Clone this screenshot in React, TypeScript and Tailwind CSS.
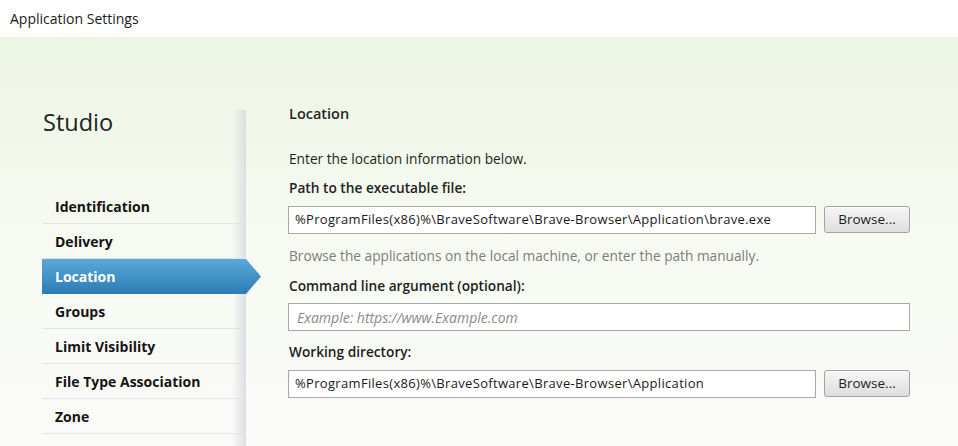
const navItems = [
  'Identification',
  'Delivery',
  'Location',
  'Groups',
  'Limit Visibility',
  'File Type Association',
  'Zone',
]

const font = { fontFamily: '"Open Sans", "Noto Sans", sans-serif' }

function BrowseButton() {
  return (
    <button className="h-[27px] w-[86px] shrink-0 rounded-[3px] border border-[#a3a3a3] bg-gradient-to-b from-[#f6f6f6] to-[#dedede] text-[13.5px] text-[#1e1e1e] shadow-[inset_0_1px_0_#ffffff]">
      Browse...
    </button>
  )
}

function TextBox({ value, placeholder, wide }: { value?: string; placeholder?: string; wide?: boolean }) {
  return (
    <div
      className={`flex h-[28px] items-center border border-[#a8a8a8] bg-white px-[6px] ${
        wide ? 'w-[622px]' : 'w-[528px]'
      }`}
    >
      {value ? (
        <span className="whitespace-nowrap text-[13px] tracking-[0.32px] text-[#1a1a1a]">{value}</span>
      ) : (
        <span className="whitespace-nowrap pl-[2px] text-[14px] italic text-[#8a8a8a]">{placeholder}</span>
      )}
    </div>
  )
}

export default function App() {
  return (
    <div className="flex h-[446px] w-[958px] flex-col overflow-hidden bg-white" style={font}>
      {/* Title bar */}
      <div className="flex h-[37px] shrink-0 items-center bg-white pl-[10px] text-[14px] text-[#1a1a1a]">
        Application Settings
      </div>

      {/* Body */}
      <div className="flex flex-1 bg-gradient-to-b from-[#edf5e4] via-[#f7faf2] to-[#fafaf9]">
        {/* Sidebar */}
        <div className="w-[246px] shrink-0 pl-[42px]">
          <div className="relative h-full">
            <div className="absolute right-0 top-[73px] bottom-0 w-[14px] bg-gradient-to-r from-transparent to-[#dcdfe2]" />
            <div className="pl-[1px] pt-[70px] text-[23.5px] leading-[30px] text-[#222222]">Studio</div>
            <div className="relative mt-[52px]">
              {navItems.map((item) =>
                item === 'Location' ? (
                  <div
                    key={item}
                    className="flex h-[35px] w-[calc(100%+15px)] items-center bg-gradient-to-b from-[#5ba8d8] to-[#2a7cb6] pl-[13px] text-[14px] font-bold text-white [clip-path:polygon(0_0,calc(100%-15px)_0,100%_50%,calc(100%-15px)_100%,0_100%)]"
                  >
                    {item}
                  </div>
                ) : (
                  <div
                    key={item}
                    className="flex h-[35px] items-center border-b border-[#e2e5e8] pl-[13px] text-[14px] font-bold text-[#141414]"
                  >
                    {item}
                  </div>
                )
              )}
            </div>
          </div>
        </div>

        {/* Content */}
        <div className="flex-1 pl-[42px] pt-[67px] text-[13.7px] text-[#1e1e1e]">
          <div className="pl-[1px] text-[14.5px] font-semibold leading-[20px] text-[#262626]">Location</div>
          <div className="mt-[26px] pl-[1px] leading-[18px]">Enter the location information below.</div>
          <div className="mt-[11px] pl-[1px] font-semibold leading-[18px]">Path to the executable file:</div>
          <div className="mt-[9px] flex gap-[8px]">
            <TextBox value="%ProgramFiles(x86)%\BraveSoftware\Brave-Browser\Application\brave.exe" />
            <BrowseButton />
          </div>
          <div className="mt-[13px] pl-[1px] leading-[18px] text-[#7c7c7c]">
            Browse the applications on the local machine, or enter the path manually.
          </div>
          <div className="mt-[12px] pl-[1px] font-semibold leading-[18px]">Command line argument (optional):</div>
          <div className="mt-[8px]">
            <TextBox wide placeholder="Example: https://www.Example.com" />
          </div>
          <div className="mt-[12px] pl-[1px] font-semibold leading-[18px]">Working directory:</div>
          <div className="mt-[9px] flex gap-[8px]">
            <TextBox value="%ProgramFiles(x86)%\BraveSoftware\Brave-Browser\Application" />
            <BrowseButton />
          </div>
        </div>
      </div>
    </div>
  )
}
